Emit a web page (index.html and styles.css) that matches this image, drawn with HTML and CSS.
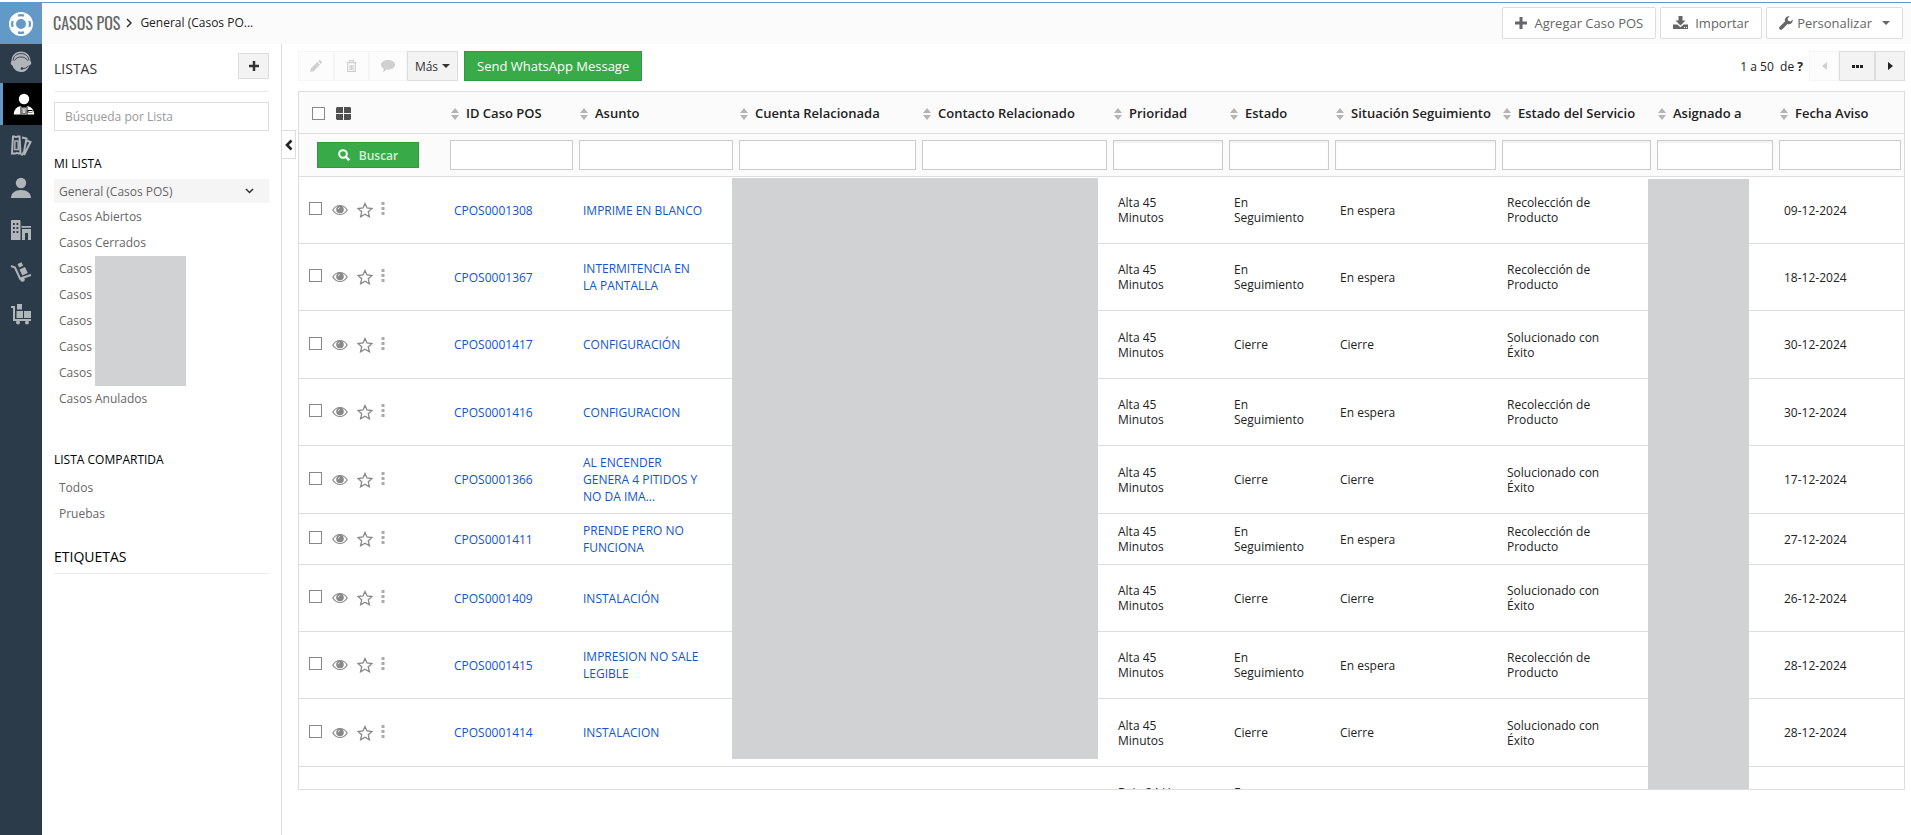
FILE: index.html
```html
<!DOCTYPE html>
<html lang="es">
<head>
<meta charset="utf-8">
<title>Casos POS</title>
<link rel="stylesheet" href="styles.css">
</head>
<body>
<svg class="defs" aria-hidden="true">
  <symbol id="i-eye" viewBox="0 0 16 12"><path fill="none" stroke="currentColor" stroke-width="1.200" d="M.8 6C2.600 3 5.200 1.500 8 1.500S13.400 3 15.200 6C13.400 9 10.800 10.500 8 10.500S2.600 9 .8 6z"/><circle cx="8" cy="5.500" r="3.800" fill="currentColor"/><path d="M6.200 5.300A1.900 1.900 0 0 1 8 3.500" fill="none" stroke="#fff" stroke-width=".7"/></symbol>
  <symbol id="i-star" viewBox="0 0 16 16"><path fill="none" stroke="currentColor" stroke-width="1.300" d="M8 1.500l2 4.500 5 .5-3.700 3.300 1.100 5L8 12.200l-4.400 2.600 1.100-5L1 6.500 6 6z"/></symbol>
  <symbol id="i-dots" viewBox="0 0 4 13"><path fill="currentColor" d="M.5 0h3v3h-3zM.5 5h3v3h-3zM.5 10h3v3h-3z"/></symbol>
  <symbol id="i-sort" viewBox="0 0 8 12"><path fill="#b5b5b5" d="M4 0l4 5H0zM4 12l4-5H0z"/></symbol>
  <symbol id="i-plus" viewBox="0 0 12 12"><path fill="currentColor" d="M4.500 0h3v4.500H12v3H7.500V12h-3V7.500H0v-3h4.500z"/></symbol>
</svg>
<div class="app">
  <header class="topbar">
    <button class="brand" aria-label="Menú principal">
      <svg width="26" height="26" viewBox="0 0 26 26"><circle cx="13" cy="13" r="8.500" fill="none" stroke="#fff" stroke-width="7"/><path fill="none" stroke="#6299c7" stroke-width="2.200" d="M10 4.600A9 9 0 0 1 16 4.600M10 21.400A9 9 0 0 0 16 21.400M4.600 10A9 9 0 0 0 4.600 16M21.400 10A9 9 0 0 1 21.400 16"/></svg>
    </button>
    <nav class="crumbs" aria-label="Ruta">
      <a class="module" href="#">CASOS POS</a>
      <svg width="6" height="10" viewBox="0 0 6 10"><path d="M1 1l4 4-4 4" fill="none" stroke="#333" stroke-width="1.500"/></svg>
      <a class="view" href="#">General (Casos PO...</a>
    </nav>
    <div class="top-actions">
      <button class="btn-top"><svg width="12" height="12"><use href="#i-plus"/></svg><span>Agregar Caso POS</span></button>
      <button class="btn-top"><svg width="15" height="13" viewBox="0 0 15 13"><path fill="currentColor" d="M5.500 0h4v4.500h3l-5 5-5-5h3zM0 8.500h4.300l3.200 2.800 3.200-2.800H15V13H0z"/><path fill="#fff" d="M11 11h1v1h-1zM13 11h1v1h-1z"/></svg><span>Importar</span></button>
      <button class="btn-top tight"><svg width="14" height="14" viewBox="0 0 14 14"><path fill="currentColor" d="M13.700 3.400A4 4 0 0 1 8.600 8L3.300 13.300a1.800 1.800 0 0 1-2.600-2.600L6 5.400A4 4 0 0 1 10.700.3L8.600 2.400l.5 2.400 2.500.6z"/></svg><span>Personalizar</span><i class="caret"></i></button>
    </div>
  </header>

  <div class="body">
    <nav class="rail" aria-label="Módulos">
      <a class="first" href="#" aria-label="Soporte"><svg width="22" height="22" viewBox="0 0 22 22"><path d="M11 .5C5.500.5 1.500 4.500 1.500 10c-1.300 1.500-.8 4 1 4.600C3.800 18.500 7 21 11 21c2.200 0 3.600-.3 4.800-1.200 1.400-1 2.600-2.800 3.500-5.200 2-.6 2.500-3.100 1.200-4.600C20.500 4.500 16.500.5 11 .5z" fill="currentColor"/><path d="M3 9.500C3.500 5 6.800 2.600 11 2.600S18.500 5 19 9.500M4.500 9.500C6 6.500 9 6 11 6s5 .5 6.500 3.500M11.500 17.500c3.500.3 5.500-.7 6.800-2.800" fill="none" stroke="#2c3b49" stroke-width=".9"/><circle cx="12" cy="17.500" r="1.300" fill="#2c3b49"/></svg></a>
      <a class="active" href="#" aria-label="Casos POS" aria-current="page"><svg width="22" height="22" viewBox="0 0 22 22"><circle cx="11" cy="6" r="5.200" fill="currentColor"/><path fill="currentColor" d="M.8 21.500c0-5 3-7.500 6.700-8.500l3.500 3 3.500-3c3.700 1 6.700 3.500 6.700 8.500z"/><path d="M8 13.500v8M14 13.500v8" stroke="#000" stroke-width="1"/><path d="M14.500 17h5v2.500h-5z" fill="#000"/><path d="M15.500 18.500h4" stroke="#fff"/><path d="M10.200 14h1.600l.6 6.500h-2.800z" fill="#fff" stroke="#000" stroke-width=".6"/></svg></a>
      <a href="#" aria-label="Tickets"><svg width="22" height="22" viewBox="0 0 22 22"><g fill="none" stroke="currentColor" stroke-width="2"><path d="M3 1.500h1.500q1.500 1 3 0H9.500l1 17H8.500q-1.500-1-3 0H2z"/><path d="M5 6h3l.3 8.500H4.700z" stroke-width="1.400"/><path d="M12 2.500l4.500 1L14 17l-2.500 3.500M16.500 5.500l4 1.500-6.500 13"/></g></svg></a>
      <a href="#" aria-label="Contactos"><svg width="22" height="22" viewBox="0 0 22 22"><circle cx="11" cy="6" r="5.200" fill="currentColor"/><path fill="currentColor" d="M1 21c0-5 4-8 10-8s10 3 10 8z"/></svg></a>
      <a href="#" aria-label="Cuentas"><svg width="22" height="22" viewBox="0 0 22 22"><path fill="currentColor" fill-rule="evenodd" d="M1 2q0-1 1-1h7.500q1 0 1 1v19H1zM3 4v2h1.800V4zM6.500 4v2h1.800V4zM3 8v2h1.800V8zM6.500 8v2h1.800V8zM3 12v2h1.800v-2zM6.500 12v2h1.800v-2zM11.500 7H21v1.800h-9.500zM12 10h9v11h-3v-7h-3v7h-3z"/></svg></a>
      <a href="#" aria-label="Productos"><svg width="22" height="22" viewBox="0 0 22 22"><path d="M1 5l4 1.500 5 11L21 14" fill="none" stroke="currentColor" stroke-width="2"/><circle cx="12.500" cy="18.500" r="2.300" fill="currentColor"/><path fill="currentColor" d="M7.500 3l4-1.800 1.600 3.500-4 1.800zM9.500 8.500l5.500-2.400 2.800 6-5.500 2.300z"/></svg></a>
      <a href="#" aria-label="Inventario"><svg width="22" height="22" viewBox="0 0 22 22"><path d="M1 4h3v13h17" fill="none" stroke="currentColor" stroke-width="2"/><path fill="currentColor" d="M6.500 8h6.500v7H6.500zM14 8h7v7h-7zM7 1h5v5.500H7z"/><circle cx="8" cy="19.500" r="2" fill="currentColor"/><circle cx="17" cy="19.500" r="2" fill="currentColor"/></svg></a>
    </nav>

    <aside class="lists">
      <div class="lists-head">
        <h2>LISTAS</h2>
        <button class="btn add" aria-label="Crear lista"><svg width="10" height="10"><use href="#i-plus"/></svg></button>
      </div>
      <input class="list-search" type="text" placeholder="Búsqueda por Lista" aria-label="Búsqueda por Lista">
      <h3>MI LISTA</h3>
      <ul>
        <li class="current"><a href="#">General (Casos POS)</a><svg width="9" height="6" viewBox="0 0 9 6"><path d="M1 1l3.500 3.500L8 1" fill="none" stroke="#333" stroke-width="1.500"/></svg></li>
        <li><a href="#">Casos Abiertos</a></li>
        <li><a href="#">Casos Cerrados</a></li>
        <li><a href="#">Casos</a></li>
        <li><a href="#">Casos</a></li>
        <li><a href="#">Casos</a></li>
        <li><a href="#">Casos</a></li>
        <li><a href="#">Casos</a></li>
        <li><a href="#">Casos Anulados</a></li>
      </ul>
      <div class="mask mask-lists"></div>
      <h3 class="shared">LISTA COMPARTIDA</h3>
      <ul>
        <li><a href="#">Todos</a></li>
        <li><a href="#">Pruebas</a></li>
      </ul>
      <h2 class="tags">ETIQUETAS</h2>
      <button class="collapse" aria-label="Ocultar listas"><svg width="8" height="12" viewBox="0 0 8 12"><path d="M6.500 1.500L2 6l4.500 4.500" fill="none" stroke="#222" stroke-width="2.600"/></svg></button>
    </aside>

    <main class="main">
      <div class="toolbar">
        <div class="group">
          <button class="btn w-edit" disabled aria-label="Editar"><svg width="12" height="12" viewBox="0 0 12 12"><path fill="currentColor" d="M0 12l.8-3.500L7.300 2l2.800 2.800-6.500 6.500zM8.100 1.200L9.300 0h.8L12 1.900v.8l-1.100 1.200z"/></svg></button>
          <button class="btn w-del" disabled aria-label="Eliminar"><svg width="11" height="12" viewBox="0 0 11 12"><path fill="none" stroke="currentColor" stroke-width="1.200" d="M.5 2.600h10M3.500 2.400V.7h4v1.700M1.700 3v8.400h7.600V3M4 5v5M5.500 5v5M7 5v5"/></svg></button>
          <button class="btn w-com" disabled aria-label="Comentar"><svg width="14" height="12" viewBox="0 0 14 12"><path fill="currentColor" d="M7 0c4 0 7 2 7 4.800S11 9.700 7 9.700L5.500 9.600C4.500 11 3 11.800 1.500 12c1-1 1.300-2 1.300-3.100C1 8 0 6.500 0 4.800 0 2 3 0 7 0z"/></svg></button>
          <button class="btn w-more">Más<i class="caret"></i></button>
        </div>
        <button class="btn-green send">Send WhatsApp Message</button>
        <div class="pager">
          <span>1 a 50&nbsp; de <b>?</b></span>
          <div class="group">
            <button class="btn w-nav" disabled aria-label="Anterior"><i class="arrow left"></i></button>
            <button class="btn w-jump" aria-label="Ir a página"><svg width="11" height="3" viewBox="0 0 11 3"><path fill="#222" d="M0 0h3v3H0zM4 0h3v3H4zM8 0h3v3H8z"/></svg></button>
            <button class="btn w-nav" aria-label="Siguiente"><i class="arrow right"></i></button>
          </div>
        </div>
      </div>

      <div class="grid">
        <table>
          <colgroup><col class="c-act"><col class="c-id"><col class="c-asu"><col class="c-cue"><col class="c-con"><col class="c-pri"><col class="c-est"><col class="c-sit"><col class="c-ser"><col class="c-asi"><col class="c-fec"></colgroup>
          <thead>
            <tr class="heads">
              <th><div class="picks"><input type="checkbox" aria-label="Seleccionar todo"><svg width="15" height="13" viewBox="0 0 15 13"><path fill="#505050" d="M1 0h6v6H0V1zM8 0h6l1 1v5H8zM0 7h7v6H1l-1-1zM8 7h7v5l-1 1H8z"/></svg></div></th>
              <th><svg class="sort"><use href="#i-sort"/></svg>ID Caso POS</th>
              <th><svg class="sort"><use href="#i-sort"/></svg>Asunto</th>
              <th><svg class="sort"><use href="#i-sort"/></svg>Cuenta Relacionada</th>
              <th><svg class="sort"><use href="#i-sort"/></svg>Contacto Relacionado</th>
              <th><svg class="sort"><use href="#i-sort"/></svg>Prioridad</th>
              <th><svg class="sort"><use href="#i-sort"/></svg>Estado</th>
              <th><svg class="sort"><use href="#i-sort"/></svg>Situación Seguimiento</th>
              <th><svg class="sort"><use href="#i-sort"/></svg>Estado del Servicio</th>
              <th><svg class="sort"><use href="#i-sort"/></svg>Asignado a</th>
              <th><svg class="sort"><use href="#i-sort"/></svg>Fecha Aviso</th>
            </tr>
            <tr class="filters">
              <td><button class="btn-green search"><svg width="12" height="12" viewBox="0 0 12 12"><circle cx="5" cy="5" r="3.800" fill="none" stroke="#fff" stroke-width="2"/><path d="M8 8l3.200 3.200" stroke="#fff" stroke-width="2.400"/></svg>Buscar</button></td>
              <td><input type="text" aria-label="ID Caso POS"></td>
              <td><input type="text" aria-label="Asunto"></td>
              <td><input type="text" aria-label="Cuenta Relacionada"></td>
              <td><input type="text" aria-label="Contacto Relacionado"></td>
              <td><input class="pick" type="text" aria-label="Prioridad"></td>
              <td><input class="pick" type="text" aria-label="Estado"></td>
              <td><input class="pick" type="text" aria-label="Situación Seguimiento"></td>
              <td><input class="pick" type="text" aria-label="Estado del Servicio"></td>
              <td><input class="pick" type="text" aria-label="Asignado a"></td>
              <td><input type="text" aria-label="Fecha Aviso"></td>
            </tr>
          </thead>
          <tbody>
            <tr><td><div class="acts"><input type="checkbox" aria-label="CPOS0001308"><svg class="eye"><use href="#i-eye"/></svg><svg class="star"><use href="#i-star"/></svg><svg class="dots"><use href="#i-dots"/></svg></div></td><td><a href="#">CPOS0001308</a></td><td><a href="#">IMPRIME EN BLANCO</a></td><td></td><td></td><td>Alta 45<br>Minutos</td><td>En<br>Seguimiento</td><td>En espera</td><td>Recolección de<br>Producto</td><td></td><td>09-12-2024</td></tr>
            <tr><td><div class="acts"><input type="checkbox" aria-label="CPOS0001367"><svg class="eye"><use href="#i-eye"/></svg><svg class="star"><use href="#i-star"/></svg><svg class="dots"><use href="#i-dots"/></svg></div></td><td><a href="#">CPOS0001367</a></td><td><a href="#">INTERMITENCIA EN<br>LA PANTALLA</a></td><td></td><td></td><td>Alta 45<br>Minutos</td><td>En<br>Seguimiento</td><td>En espera</td><td>Recolección de<br>Producto</td><td></td><td>18-12-2024</td></tr>
            <tr class="tall"><td><div class="acts"><input type="checkbox" aria-label="CPOS0001417"><svg class="eye"><use href="#i-eye"/></svg><svg class="star"><use href="#i-star"/></svg><svg class="dots"><use href="#i-dots"/></svg></div></td><td><a href="#">CPOS0001417</a></td><td><a href="#">CONFIGURACIÓN</a></td><td></td><td></td><td>Alta 45<br>Minutos</td><td>Cierre</td><td>Cierre</td><td>Solucionado con<br>Éxito</td><td></td><td>30-12-2024</td></tr>
            <tr><td><div class="acts"><input type="checkbox" aria-label="CPOS0001416"><svg class="eye"><use href="#i-eye"/></svg><svg class="star"><use href="#i-star"/></svg><svg class="dots"><use href="#i-dots"/></svg></div></td><td><a href="#">CPOS0001416</a></td><td><a href="#">CONFIGURACION</a></td><td></td><td></td><td>Alta 45<br>Minutos</td><td>En<br>Seguimiento</td><td>En espera</td><td>Recolección de<br>Producto</td><td></td><td>30-12-2024</td></tr>
            <tr class="tall"><td><div class="acts"><input type="checkbox" aria-label="CPOS0001366"><svg class="eye"><use href="#i-eye"/></svg><svg class="star"><use href="#i-star"/></svg><svg class="dots"><use href="#i-dots"/></svg></div></td><td><a href="#">CPOS0001366</a></td><td><a href="#">AL ENCENDER<br>GENERA 4 PITIDOS Y<br>NO DA IMA...</a></td><td></td><td></td><td>Alta 45<br>Minutos</td><td>Cierre</td><td>Cierre</td><td>Solucionado con<br>Éxito</td><td></td><td>17-12-2024</td></tr>
            <tr class="short"><td><div class="acts"><input type="checkbox" aria-label="CPOS0001411"><svg class="eye"><use href="#i-eye"/></svg><svg class="star"><use href="#i-star"/></svg><svg class="dots"><use href="#i-dots"/></svg></div></td><td><a href="#">CPOS0001411</a></td><td><a href="#">PRENDE PERO NO<br>FUNCIONA</a></td><td></td><td></td><td>Alta 45<br>Minutos</td><td>En<br>Seguimiento</td><td>En espera</td><td>Recolección de<br>Producto</td><td></td><td>27-12-2024</td></tr>
            <tr><td><div class="acts"><input type="checkbox" aria-label="CPOS0001409"><svg class="eye"><use href="#i-eye"/></svg><svg class="star"><use href="#i-star"/></svg><svg class="dots"><use href="#i-dots"/></svg></div></td><td><a href="#">CPOS0001409</a></td><td><a href="#">INSTALACIÓN</a></td><td></td><td></td><td>Alta 45<br>Minutos</td><td>Cierre</td><td>Cierre</td><td>Solucionado con<br>Éxito</td><td></td><td>26-12-2024</td></tr>
            <tr><td><div class="acts"><input type="checkbox" aria-label="CPOS0001415"><svg class="eye"><use href="#i-eye"/></svg><svg class="star"><use href="#i-star"/></svg><svg class="dots"><use href="#i-dots"/></svg></div></td><td><a href="#">CPOS0001415</a></td><td><a href="#">IMPRESION NO SALE<br>LEGIBLE</a></td><td></td><td></td><td>Alta 45<br>Minutos</td><td>En<br>Seguimiento</td><td>En espera</td><td>Recolección de<br>Producto</td><td></td><td>28-12-2024</td></tr>
            <tr class="tall"><td><div class="acts"><input type="checkbox" aria-label="CPOS0001414"><svg class="eye"><use href="#i-eye"/></svg><svg class="star"><use href="#i-star"/></svg><svg class="dots"><use href="#i-dots"/></svg></div></td><td><a href="#">CPOS0001414</a></td><td><a href="#">INSTALACION</a></td><td></td><td></td><td>Alta 45<br>Minutos</td><td>Cierre</td><td>Cierre</td><td>Solucionado con<br>Éxito</td><td></td><td>28-12-2024</td></tr>
            <tr><td></td><td></td><td></td><td></td><td></td><td>Baja 24 H<br>Horas</td><td>En<br>Seguimiento</td><td></td><td></td><td></td><td></td></tr>
          </tbody>
        </table>
        <div class="mask mask-accounts"></div>
        <div class="mask mask-owner"></div>
      </div>
    </main>
  </div>
</div>
</body>
</html>
```
FILE: styles.css
```css
* { box-sizing: border-box; }
body {
  margin: 0;
  font-family: "Open Sans", "Noto Sans", sans-serif;
  font-size: 12px;
  color: #222;
  background: #fff;
}
h2, h3, ul { margin: 0; padding: 0; font-weight: 400; }
ul { list-style: none; }
a { color: inherit; text-decoration: none; }
button, input { font-family: inherit; font-size: inherit; margin: 0; }
svg { display: block; flex: none; }
.defs { position: absolute; width: 0; height: 0; }

.app { display: flex; flex-direction: column; height: 100vh; padding-top: 2px; }

/* Top bar */
.topbar {
  display: flex;
  align-items: center;
  height: 42px;
  flex: none;
  padding-right: 8px;
  border-top: 1px solid #6299c7;
  background: #fbfbfb;
}
.brand {
  display: flex;
  align-items: center;
  justify-content: center;
  width: 42px;
  height: 41px;
  border: 0;
  padding: 0;
  background: #6299c7;
}
.crumbs { display: flex; align-items: center; gap: 6px; padding: 0 0 2px 11px; }
.module {
  font-family: "Oswald", "Liberation Sans Narrow", "Open Sans Condensed", "Roboto Condensed", sans-serif;
  font-size: 16px;
  color: #666;
}
.view { padding-left: 2px; }
.top-actions { display: flex; gap: 4px; margin-left: auto; padding-bottom: 2px; }
.btn-top {
  display: flex;
  align-items: center;
  gap: 7px;
  height: 32px;
  padding: 0 12px;
  border: 1px solid #ddd;
  border-radius: 2px;
  background: #fff;
  color: #666;
  font-size: 13px;
}
.btn-top.tight { gap: 4px; }
.btn-top .caret { margin-left: 6px; }
.caret {
  border: 4px solid transparent;
  border-top-color: currentColor;
  border-bottom: 0;
  margin-left: 4px;
}

.body { display: flex; flex: 1; min-height: 0; }

/* Module rail */
.rail { width: 42px; flex: none; background: #2c3b49; color: #b0b5ba; }
.rail a { display: flex; align-items: center; justify-content: center; height: 42px; }
.rail .first { height: 39px; padding-bottom: 4px; }
.rail .active { background: #000; color: #fff; border-left: 3px solid #6299c7; padding-left: 3px; }

/* Lists panel */
.lists {
  position: relative;
  width: 240px;
  flex: none;
  padding: 9px 12px 0;
  border-right: 1px solid #ddd;
}
.lists-head {
  display: flex;
  justify-content: space-between;
  height: 39px;
  margin-bottom: 10px;
  border-bottom: 1px solid #eaeaea;
}
.lists h2 { font-size: 14px; line-height: 32px; color: #333; }
.lists h3 { font-size: 12px; line-height: 16px; color: #000; }
.list-search {
  display: block;
  width: 100%;
  height: 29px;
  margin-bottom: 25px;
  padding: 0 10px;
  border: 1px solid #ddd;
  color: #444;
}
.list-search::placeholder { color: #999; }
.lists ul { padding-top: 7px; }
.lists li {
  display: flex;
  align-items: center;
  justify-content: space-between;
  height: 26px;
  padding: 0 15px 0 5px;
  color: #666;
}
.lists .current { height: 24px; background: #f5f5f5; }
.lists h3.shared { margin-top: 41px; }
.lists h3.shared + ul { padding-top: 6px; }
.lists h2.tags { margin-top: 15px; color: #000; border-bottom: 1px solid #eaeaea; }
.collapse {
  position: absolute;
  left: 100%;
  top: 86px;
  width: 15px;
  height: 29px;
  padding: 0;
  display: flex;
  align-items: center;
  justify-content: center;
  border: 1px solid #ddd;
  background: #fff;
}
.mask { position: absolute; background: #d1d2d4; }
.mask-lists { left: 53px; top: 212px; width: 91px; height: 130px; }

/* Main area */
.main { display: flex; flex-direction: column; flex: 1; min-width: 0; padding: 7px 6px 45px 16px; }
.toolbar { display: flex; align-items: center; margin-bottom: 10px; }
.group { display: flex; }
.btn {
  display: flex;
  align-items: center;
  justify-content: center;
  height: 30px;
  padding: 0;
  border: 1px solid #ddd;
  background: #f3f3f3;
  color: #333;
}
.btn:disabled { border-color: #f5f5f5; background: #fcfcfc; color: #d0d0d0; }
.btn.add { width: 31px; height: 26px; }
.w-edit { width: 36px; }
.w-del { width: 35px; }
.w-com { width: 38px; }
.w-more { width: 51px; }
.w-nav { width: 30px; }
.w-jump { width: 36px; }
.arrow { border: 4px solid transparent; }
.arrow.left { border-right: 5px solid currentColor; border-left: 0; }
.arrow.right { border-left: 5px solid #222; border-right: 0; }
.btn-green { border: 1px solid #2f9a40; background: #38aa48; color: #fff; }
.send { height: 30px; margin-left: 6px; padding: 0 12px; font-size: 13px; }
.pager { display: flex; align-items: center; gap: 6px; margin-left: auto; }

/* Records table */
.grid { position: relative; flex: 1; min-height: 0; overflow: hidden; border: 1px solid #ddd; }
table { width: 100%; table-layout: fixed; border-collapse: separate; border-spacing: 0; }
.c-act { width: 148px; }
.c-id { width: 129px; }
.c-asu { width: 160px; }
.c-cue { width: 183px; }
.c-con { width: 191px; }
.c-pri { width: 116px; }
.c-est { width: 106px; }
.c-sit { width: 167px; }
.c-ser { width: 155px; }
.c-asi { width: 122px; }
.c-fec { width: 128px; }
thead { background: #fbfbfb; }
th, td { border-bottom: 1px solid #ddd; text-align: left; }
.heads th { height: 42px; padding: 1px 0 0 4px; font-size: 13px; font-weight: 600; white-space: nowrap; }
.heads .picks { display: flex; align-items: center; gap: 11px; padding-left: 9px; }
.sort { display: inline-block; width: 8px; height: 12px; margin-right: 7px; vertical-align: -2px; }
.filters td { height: 43px; padding: 0 3px; }
.filters input { display: block; width: 100%; height: 30px; border: 1px solid #ccc; background: #fff; }
.filters .pick { box-shadow: inset 0 2px 2px #f0f0f0; }
.search {
  display: flex;
  align-items: center;
  justify-content: center;
  gap: 9px;
  width: 102px;
  height: 26px;
  margin-left: 15px;
  font-weight: 600;
  color: #d7eeda;
}
input[type="checkbox"] {
  appearance: none;
  width: 13px;
  height: 13px;
  border: 1px solid #888;
  background: #fff;
}
tbody td { height: 67px; padding: 0 7px; line-height: 15px; }
tbody td:nth-child(n+6) { padding-left: 8px; }
tbody .tall td { height: 68px; }
tbody .short td { height: 51px; }
tbody a { color: #15c; line-height: 17px; }
.acts { display: flex; align-items: center; padding-left: 3px; color: #888; }
.acts input, .dots { margin-bottom: 3px; }
.eye { width: 16px; height: 12px; margin: 0 9px 0 10px; }
.star { width: 16px; height: 16px; margin-right: 8px; }
.dots { width: 4px; height: 13px; color: #aaa; }
.mask-accounts { left: 27%; top: 86px; width: 366px; height: 581px; }
.mask-owner { right: 155px; top: 87px; bottom: 0; width: 101px; }
```
